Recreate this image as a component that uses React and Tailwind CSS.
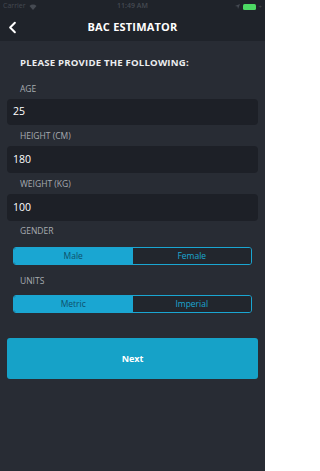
import { ChevronLeft } from 'lucide-react'

const fields = [
  { label: 'AGE', value: '25', h: 'h-[26px]' },
  { label: 'HEIGHT (CM)', value: '180', h: 'h-[27px]' },
  { label: 'WEIGHT (KG)', value: '100', h: 'h-[27px]' },
]

function Segmented({ left, right }) {
  return (
    <div className="mx-[13px] h-[18px] flex rounded-[3px] border border-[#1aa6d2] overflow-hidden text-[8.5px]">
      <div className="flex-1 bg-[#1aa6d2] text-[#0e4f6b] flex items-center justify-center">{left}</div>
      <div className="flex-1 bg-[#22262d] text-[#1aa6d2] flex items-center justify-center">{right}</div>
    </div>
  )
}

export default function App() {
  return (
    <div
      className="w-[265px] h-[471px] bg-[#282c34] flex flex-col overflow-hidden"
      style={{ fontFamily: '"Open Sans", "Noto Sans", sans-serif' }}
    >
      {/* Status + nav */}
      <div className="bg-[#1f232a] h-[41px] flex flex-col">
        <div className="h-[13px] flex items-center justify-between px-[3px] text-[7px] text-[#454a52] relative">
          <div className="flex items-center gap-[3px]">
            <span>Carrier</span>
            <svg width="8" height="6" viewBox="0 0 8 6">
              <path d="M4 6 L0.5 2 A5 5 0 0 1 7.5 2 Z" fill="#454a52" />
            </svg>
          </div>
          <span className="absolute left-0 right-0 text-center font-semibold">11:49 AM</span>
          <div className="flex items-center gap-[3px]">
            <svg width="5" height="5" viewBox="0 0 5 5">
              <path d="M5 0 L0 2 L2.5 2.5 L3 5 Z" fill="#454a52" />
            </svg>
            <div className="w-[13px] h-[6px] rounded-[1.5px] bg-[#4cd964]" />
            <span className="text-[6px] leading-none">+</span>
          </div>
        </div>
        <div className="flex-1 relative flex items-center justify-center">
          <ChevronLeft className="absolute left-[3px] top-[5px] w-[19px] h-[19px] text-white" strokeWidth={2.5} />
          <span className="text-white font-bold text-[11px] tracking-[0.2px]">BAC ESTIMATOR</span>
        </div>
      </div>

      {/* Form */}
      <div className="flex flex-col">
        <p className="mt-[15px] ml-[20px] text-[9.6px] leading-[14px] font-bold text-[#eceef0] tracking-[0.2px]">
          PLEASE PROVIDE THE FOLLOWING:
        </p>

        {fields.map((f, i) => (
          <div key={f.label} className={i === 0 ? 'mt-[13px]' : 'mt-[5px]'}>
            <p className="ml-[20px] text-[8.5px] leading-[12px] font-medium text-[#a7abb1]">{f.label}</p>
            <div className={`mt-[4px] mx-[7px] ${f.h} bg-[#1d2027] rounded-[4px] flex items-center pl-[6px] text-[10.5px] text-white`}>
              {f.value}
            </div>
          </div>
        ))}

        <p className="mt-[4px] ml-[20px] text-[8.5px] leading-[12px] font-medium text-[#a7abb1]">GENDER</p>
        <div className="mt-[10px]">
          <Segmented left="Male" right="Female" />
        </div>

        <p className="mt-[10px] ml-[20px] text-[8.5px] leading-[12px] font-medium text-[#a7abb1]">UNITS</p>
        <div className="mt-[8px]">
          <Segmented left="Metric" right="Imperial" />
        </div>

        <button className="mt-[25px] mx-[7px] h-[41px] rounded-[3px] bg-[#16a2c8] text-white font-bold text-[9px]">
          Next
        </button>
      </div>
    </div>
  )
}
